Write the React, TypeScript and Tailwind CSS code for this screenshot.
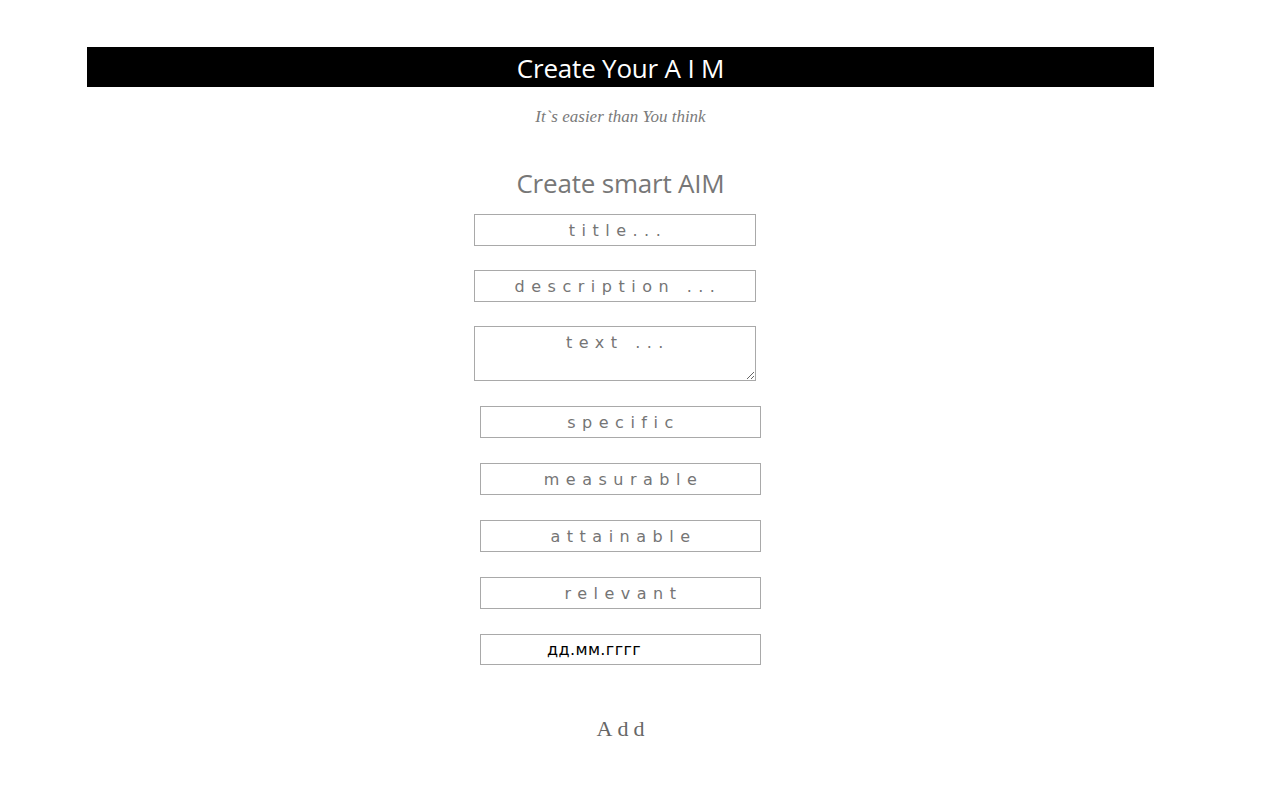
const FIELDS = ["specific", "measurable", "attainable", "relevant"];

const baseCls =
  "block h-[32px] border border-[#a9a9a9] bg-white pl-[6px] text-center text-[16px] tracking-[6.5px] text-[#757575] outline-none placeholder:text-[#757575] [font-family:'DejaVu_Sans',Verdana,sans-serif]";

export default function App() {
  return (
    <div className="min-h-[795px] bg-white pt-[47px]">
      <div className="ml-[87px] w-[1067px]">
        <header className="flex h-[40px] items-center justify-center bg-black pt-[2px]">
          <h1 className="text-[26px] leading-none text-white [font-family:'Open_Sans',sans-serif] tracking-[-0.2px]">
            Create Your A I M
          </h1>
        </header>

        <p className="mt-[20px] text-center text-[17px] italic text-[#7a7a7a] [font-family:'Liberation_Serif',serif] leading-[20px]">
          It`s easier than You think
        </p>

        <div className="mt-[40px] flex flex-col items-center">
          <h2 className="text-[26px] leading-[32px] text-[#777] [font-family:'Open_Sans',sans-serif] tracking-[-0.2px]">
            Create smart AIM
          </h2>

          <form className="mt-[15px] flex flex-col items-center">
            <div className="-ml-[11px] flex flex-col gap-[24px]">
              <input className={baseCls + " h-[31px] w-[282px]"} placeholder="title..." />
              <input className={baseCls + " w-[282px]"} placeholder="description ..." />
              <textarea
                className={baseCls + " h-[55px] w-[282px] resize-y pt-[4px]"}
                placeholder="text ..."
              />
            </div>

            <div className="mt-[25px] flex flex-col gap-[25px]">
              {FIELDS.map((f) => (
                <input key={f} className={baseCls + " w-[281px]"} placeholder={f} />
              ))}
              <div className="flex h-[31px] w-[281px] items-center border border-[#a9a9a9] pl-[66px] text-[16px] tracking-[0.4px] text-black [font-family:'DejaVu_Sans',Verdana,sans-serif]">
                дд.мм.гггг
              </div>
            </div>

            <button
              type="button"
              className="mt-[47px] pl-[5px] text-[22px] tracking-[5px] text-[#666] [font-family:'Liberation_Serif',serif]"
            >
              Add
            </button>
          </form>
        </div>
      </div>
    </div>
  );
}
